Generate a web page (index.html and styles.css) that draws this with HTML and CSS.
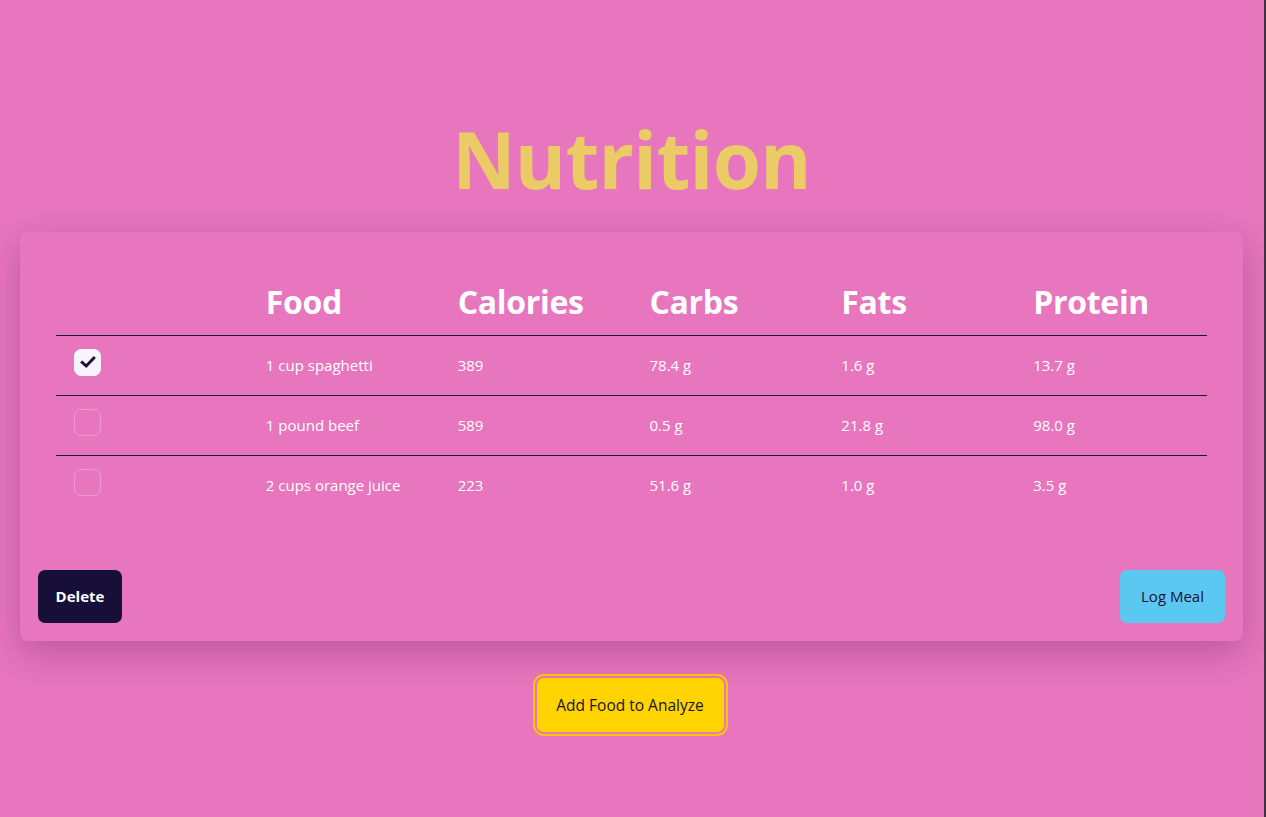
FILE: index.html
```html
<!DOCTYPE html>
<html lang="en">
<head>
<meta charset="utf-8">
<title>Nutrition</title>
<link rel="stylesheet" href="styles.css">
</head>
<body>
<div class="page">
  <h1 class="title">Nutrition</h1>
  <section class="card">
    <div class="table-wrap">
      <table class="food-table">
        <thead>
          <tr>
            <th></th>
            <th>Food</th>
            <th>Calories</th>
            <th>Carbs</th>
            <th>Fats</th>
            <th>Protein</th>
          </tr>
        </thead>
        <tbody>
          <tr>
            <td><span class="check checked"><svg viewBox="0 0 20 20" width="18" height="18"><path d="M3.5 10.5 L8 14.5 L16.5 5.5" fill="none" stroke="#1b1236" stroke-width="3.2" stroke-linecap="square" stroke-linejoin="miter"/></svg></span></td>
            <td>1 cup spaghetti</td>
            <td>389</td>
            <td>78.4 g</td>
            <td>1.6 g</td>
            <td>13.7 g</td>
          </tr>
          <tr>
            <td><span class="check"></span></td>
            <td>1 pound beef</td>
            <td>589</td>
            <td>0.5 g</td>
            <td>21.8 g</td>
            <td>98.0 g</td>
          </tr>
          <tr>
            <td><span class="check"></span></td>
            <td>2 cups orange juice</td>
            <td>223</td>
            <td>51.6 g</td>
            <td>1.0 g</td>
            <td>3.5 g</td>
          </tr>
        </tbody>
      </table>
    </div>
    <div class="actions">
      <button class="btn btn-delete">Delete</button>
      <button class="btn btn-log">Log Meal</button>
    </div>
  </section>
  <div class="add-row">
    <button class="btn btn-add">Add Food to Analyze</button>
  </div>
</div>
</body>
</html>
```

FILE: styles.css
```css
html, body {
  margin: 0;
  padding: 0;
  height: 100%;
}
body {
  background: #e776be;
  font-family: "Open Sans", "Noto Sans", "Liberation Sans", sans-serif;
  color: #ffffff;
}
.page {
  box-sizing: border-box;
  min-height: 100%;
  border-right: 2px solid #3b3340;
  padding: 108px 21px 40px 20px;
}
.title {
  margin: 0 0 21px;
  text-align: center;
  font-size: 78px;
  line-height: 103px;
  font-weight: 700;
  color: #eacb66;
  letter-spacing: -0.7px;
}
.card {
  background: #e776be;
  border-radius: 8px;
  padding: 18px;
  box-shadow: 0 12px 36px rgba(90, 20, 70, 0.3);
}
.table-wrap {
  padding: 25px 18px 55px;
}
.food-table {
  width: 100%;
  border-collapse: collapse;
  table-layout: fixed;
}
.food-table th {
  height: 60px;
  padding: 0 18px 6px;
  box-sizing: border-box;
  text-align: left;
  font-size: 32px;
  font-weight: 700;
  border-bottom: 1px solid #1b1236;
  vertical-align: middle;
  letter-spacing: -0.3px;
}
.food-table td {
  height: 59px;
  padding: 0 18px;
  font-size: 15px;
  vertical-align: middle;
}
.food-table tbody tr:not(:last-child) td {
  border-bottom: 1px solid #1b1236;
}
.check {
  display: block;
  box-sizing: border-box;
  width: 27px;
  height: 27px;
  border-radius: 7px;
  border: 1px solid rgba(255, 255, 255, 0.25);
  margin-top: -6px;
}
.check.checked {
  background: #f8f4fc;
  border-color: #f8f4fc;
  display: flex;
  align-items: center;
  justify-content: center;
}
.actions {
  display: flex;
  justify-content: space-between;
}
.btn {
  font-family: "Open Sans", "Noto Sans", "Liberation Sans", sans-serif;
  font-size: 15px;
  border: none;
  border-radius: 7px;
  height: 53px;
  cursor: pointer;
}
.btn-delete {
  width: 84px;
  background: #170e3a;
  color: #ffffff;
  font-weight: 700;
}
.btn-log {
  width: 105px;
  background: #5bc8f2;
  color: #1b1236;
}
.add-row {
  display: flex;
  justify-content: center;
  padding-top: 37px;
}
.btn-add {
  width: 187px;
  height: 54px;
  font-size: 15.5px;
  background: #ffd400;
  color: #1b1236;
  outline: 2px solid #f7c600;
  outline-offset: 2px;
  margin-right: 3px;
}
```
